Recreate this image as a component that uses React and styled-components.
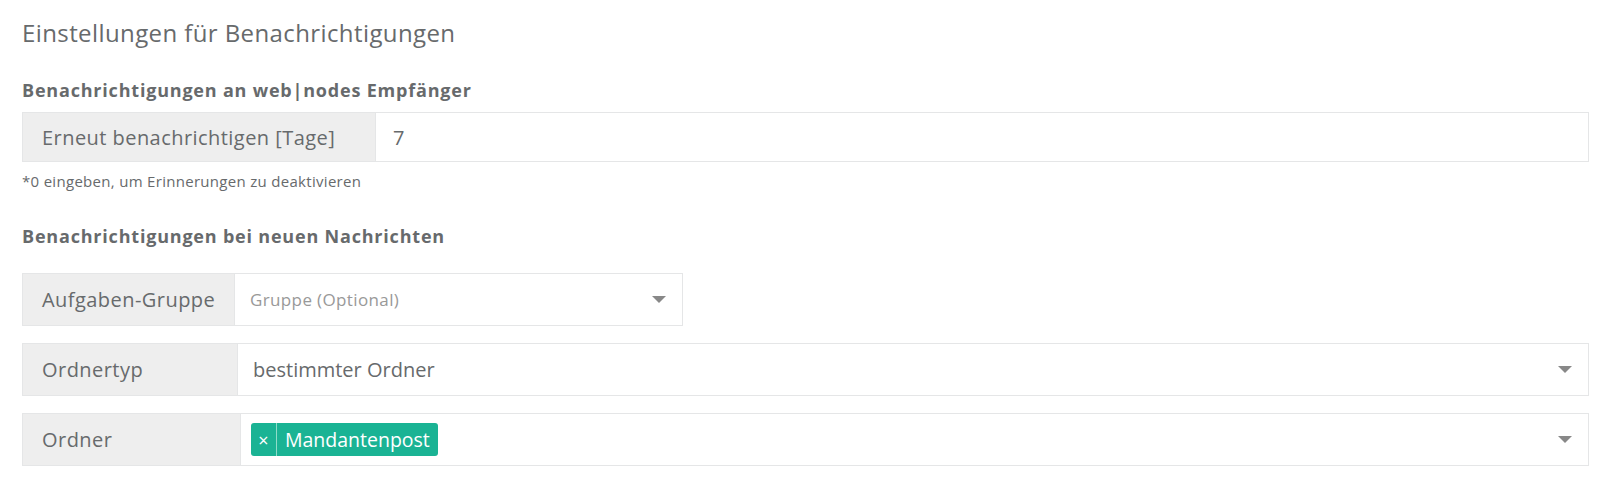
import React from 'react'
import styled, { createGlobalStyle } from 'styled-components'

const GlobalStyle = createGlobalStyle`
  html, body {
    margin: 0;
    padding: 0;
    background: #ffffff;
  }
  body {
    font-family: "Open Sans", "Liberation Sans", sans-serif;
    color: #676a6c;
  }
`;

export default function App() {
  return (
    <>
      <GlobalStyle />
      <Page>
        <Title>Einstellungen für Benachrichtigungen</Title>

        <SubTitle>Benachrichtigungen an web|nodes Empfänger</SubTitle>
        <InputGroup>
          <Addon $width={353}>Erneut benachrichtigen [Tage]</Addon>
          <TextInput>7</TextInput>
        </InputGroup>
        <Hint>*0 eingeben, um Erinnerungen zu deaktivieren</Hint>

        <SubTitle $second>Benachrichtigungen bei neuen Nachrichten</SubTitle>
        <SelectRows>
          <InputGroup $tall $narrow>
            <Addon $width={212}>Aufgaben-Gruppe</Addon>
            <Select>
              <Placeholder>Gruppe (Optional)</Placeholder>
              <Caret />
            </Select>
          </InputGroup>
          <InputGroup $tall>
            <Addon $width={215}>Ordnertyp</Addon>
            <Select>
              <Value>bestimmter Ordner</Value>
              <Caret />
            </Select>
          </InputGroup>
          <InputGroup $tall>
            <Addon $width={218}>Ordner</Addon>
            <Select>
              <Tag>
                <TagRemove>×</TagRemove>
                <TagLabel>Mandantenpost</TagLabel>
              </Tag>
              <Caret />
            </Select>
          </InputGroup>
        </SelectRows>
      </Page>
    </>
  )
};

const Page = styled.div`
  padding: 19px 29px 10px 22px;
`;

const Title = styled.h3`
  margin: 0;
  font-size: 24px;
  line-height: 28px;
  font-weight: 400;
  letter-spacing: 0.4px;
  color: #676a6c;
`;

const SubTitle = styled.h4`
  margin: ${p => (p.$second ? '34px 0 0' : '32px 0 0')};
  font-size: 18px;
  line-height: 22px;
  font-weight: 700;
  letter-spacing: 0.8px;
  color: #676a6c;
`;

const InputGroup = styled.div`
  display: flex;
  height: ${p => (p.$tall ? '53px' : '50px')};
  width: ${p => (p.$narrow ? '661px' : '100%')};
  margin-top: ${p => (p.$tall ? '0' : '11px')};
  box-sizing: border-box;
`;

const Addon = styled.div`
  flex: 0 0 ${p => p.$width}px;
  box-sizing: border-box;
  display: flex;
  align-items: center;
  padding-left: 19px;
  background: #eeeeee;
  border: 1px solid #e5e6e7;
  border-right: none;
  font-size: 20px;
  letter-spacing: 0.45px;
  color: #676a6c;
  white-space: nowrap;
`;

const TextInput = styled.div`
  flex: 1;
  box-sizing: border-box;
  display: flex;
  align-items: center;
  padding-left: 17px;
  border: 1px solid #e5e6e7;
  font-size: 20px;
  color: #676a6c;
`;

const Hint = styled.div`
  margin-top: 9px;
  font-size: 15px;
  line-height: 20px;
  letter-spacing: 0.3px;
  color: #676a6c;
`;

const SelectRows = styled.div`
  margin-top: 26px;
  display: flex;
  flex-direction: column;
  gap: 17px;
`;

const Select = styled.div`
  flex: 1;
  box-sizing: border-box;
  display: flex;
  align-items: center;
  padding: 0 16px 0 10px;
  border: 1px solid #e5e6e7;
  background: #fff;
`;

const Placeholder = styled.span`
  flex: 1;
  padding-left: 5px;
  font-size: 17px;
  letter-spacing: 0.37px;
  color: #999999;
`;

const Value = styled.span`
  flex: 1;
  padding-left: 5px;
  font-size: 20px;
  color: #676a6c;
`;

const Caret = styled.span`
  margin-left: auto;
  width: 0;
  height: 0;
  border-left: 7px solid transparent;
  border-right: 7px solid transparent;
  border-top: 7px solid #888888;
`;

const Tag = styled.span`
  display: inline-flex;
  align-items: stretch;
  height: 33px;
  border-radius: 3px;
  background: #1ab394;
  color: #ffffff;
  overflow: hidden;
`;

const TagRemove = styled.span`
  display: flex;
  align-items: center;
  justify-content: center;
  width: 25px;
  font-size: 18px;
  font-weight: 400;
  border-right: 1px solid #8fdcc9;
`;

const TagLabel = styled.span`
  display: flex;
  align-items: center;
  padding: 0 8px 0 8px;
  font-size: 19.5px;
`;
